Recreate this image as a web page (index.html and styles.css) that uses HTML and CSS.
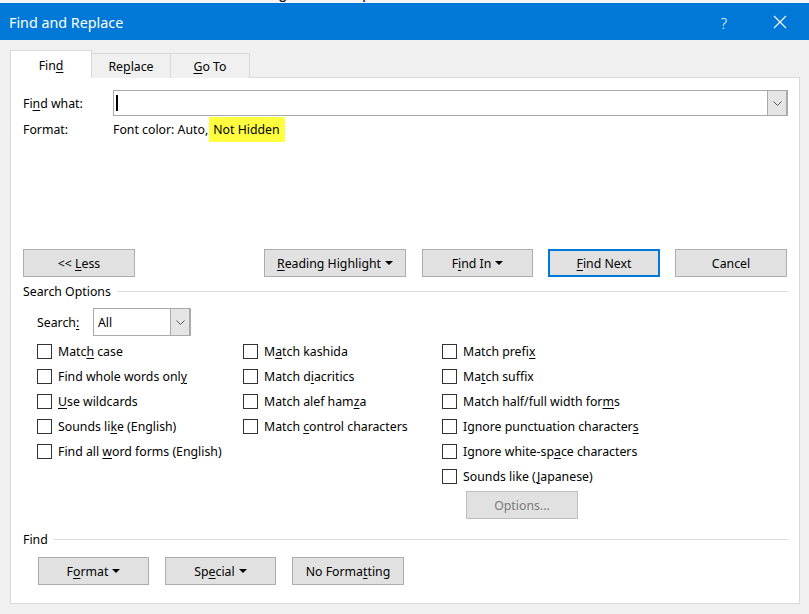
FILE: index.html
```html
<!DOCTYPE html>
<html lang="en">
<head>
<meta charset="utf-8">
<title>Find and Replace</title>
<link rel="stylesheet" href="styles.css">
</head>
<body>
<div class="doc-strip"><div class="doc-text">Nes as link buttons for clicking on Caption 2 if not the</div></div>
<div class="window">
  <header class="titlebar">
    <span class="title">Find and Replace</span>
    <span class="help">?</span>
    <span class="close"><svg width="14" height="14" viewBox="0 0 14 14"><path d="M1 1 L13 13 M13 1 L1 13" stroke="#fff" stroke-width="1.1" fill="none"/></svg></span>
  </header>
  <main class="body">
    <div class="tabs">
      <div class="tab active"><span>Fin<u>d</u></span></div>
      <div class="tab"><span>Re<u>p</u>lace</span></div>
      <div class="tab"><span><u>G</u>o To</span></div>
    </div>
    <section class="panel">
      <div class="find-row">
        <span class="lbl">Fi<u>n</u>d what:</span>
        <div class="combo">
          <div class="combo-field"><span class="caret"></span></div>
          <div class="combo-btn"><svg width="9" height="5" viewBox="0 0 9 5"><path d="M0.5 0.5 L4.5 4.5 L8.5 0.5" stroke="#555" stroke-width="1" fill="none"/></svg></div>
        </div>
      </div>
      <div class="format-row">
        <span class="lbl">Format:</span>
        <span class="fmt">Font color: Auto,<mark class="hl">Not Hidden</mark></span>
      </div>

      <div class="btn-row">
        <button class="btn w112"><span>&lt;&lt; <u>L</u>ess</span></button>
        <div class="grow"></div>
        <button class="btn w142"><span><u>R</u>eading Highlight</span><span class="tri"></span></button>
        <button class="btn w111"><span>F<u>i</u>nd In</span><span class="tri"></span></button>
        <button class="btn w112 default"><span><u>F</u>ind Next</span></button>
        <button class="btn w112"><span>Cancel</span></button>
      </div>

      <div class="group-head"><span>Search Options</span><span class="rule"></span></div>

      <div class="search-row">
        <span class="search-lbl">Search<u>:</u></span>
        <div class="select">
          <div class="select-field">All</div>
          <div class="select-btn"><svg width="9" height="5" viewBox="0 0 9 5"><path d="M0.5 0.5 L4.5 4.5 L8.5 0.5" stroke="#555" stroke-width="1" fill="none"/></svg></div>
        </div>
      </div>

      <div class="options">
        <div class="col c1">
          <div class="chk"><span class="box"></span><span>Matc<u>h</u> case</span></div>
          <div class="chk"><span class="box"></span><span>Find whole words onl<u>y</u></span></div>
          <div class="chk"><span class="box"></span><span><u>U</u>se wildcards</span></div>
          <div class="chk"><span class="box"></span><span>Sounds li<u>k</u>e (English)</span></div>
          <div class="chk"><span class="box"></span><span>Find all <u>w</u>ord forms (English)</span></div>
        </div>
        <div class="col c2">
          <div class="chk"><span class="box"></span><span>M<u>a</u>tch kashida</span></div>
          <div class="chk"><span class="box"></span><span>Match d<u>i</u>acritics</span></div>
          <div class="chk"><span class="box"></span><span>Match alef ham<u>z</u>a</span></div>
          <div class="chk"><span class="box"></span><span>Match <u>c</u>ontrol characters</span></div>
        </div>
        <div class="col c3">
          <div class="chk"><span class="box"></span><span>Match prefi<u>x</u></span></div>
          <div class="chk"><span class="box"></span><span>Ma<u>t</u>ch suffix</span></div>
          <div class="chk"><span class="box"></span><span>Match half/full width for<u>m</u>s</span></div>
          <div class="chk"><span class="box"></span><span>Ignore punctuation character<u>s</u></span></div>
          <div class="chk"><span class="box"></span><span>Ignore white-sp<u>a</u>ce characters</span></div>
          <div class="chk"><span class="box"></span><span>Sounds like (<u>J</u>apanese)</span></div>
          <button class="btn w112 disabled options-btn"><span>Options...</span></button>
        </div>
      </div>

      <div class="group-head find-head"><span>Find</span><span class="rule"></span></div>

      <div class="bottom-row">
        <button class="btn w111"><span>F<u>o</u>rmat</span><span class="tri"></span></button>
        <button class="btn w111"><span>Sp<u>e</u>cial</span><span class="tri"></span></button>
        <button class="btn w112"><span>No Forma<u>t</u>ting</span></button>
      </div>
    </section>
  </main>
</div>
</body>
</html>
```

FILE: styles.css
```css
* { box-sizing: border-box; }

html, body {
  margin: 0;
  padding: 0;
}

body {
  width: 809px;
  height: 614px;
  overflow: hidden;
  background: #f0f0f0;
  font-family: "Noto Sans", "Open Sans", sans-serif;
  font-size: 12.3px;
  color: #000;
}

u { text-decoration: underline; text-underline-offset: 2px; }

.doc-strip {
  height: 3px;
  overflow: hidden;
  background: #f4f4f4;
}

.doc-text {
  margin-top: -15px;
  padding-left: 2px;
  font-family: "Liberation Sans", sans-serif;
  font-size: 16px;
  line-height: 18px;
  word-spacing: 14px;
  white-space: nowrap;
  color: #111;
}

.titlebar {
  height: 37px;
  background: #0078d7;
  color: #fff;
  display: flex;
  align-items: center;
  padding-left: 9px;
  padding-top: 2px;
}

.title {
  font-size: 14.3px;
  flex: 1;
}

.help {
  width: 20px;
  text-align: center;
  font-size: 15px;
  margin-right: 39px;
  font-weight: 300;
}

.close {
  display: flex;
  align-items: center;
  margin-right: 22px;
  margin-top: -2px;
}

.body {
  padding: 10px 9px 0 10px;
}

.tabs {
  display: flex;
  align-items: flex-end;
  height: 28px;
  margin-bottom: -1px;
}

.tab {
  height: 25px;
  border: 1px solid #d9d9d9;
  border-bottom: none;
  background: #f0f0f0;
  display: flex;
  align-items: center;
  justify-content: center;
  width: 80px;
  margin-left: -1px;
  padding-top: 1px;
}

.tab.active {
  position: relative;
  z-index: 2;
  height: 28px;
  width: 82px;
  margin-left: 0;
  background: #fff;
  padding-top: 2px;
}

.tab.active + .tab { margin-left: 0; border-left: none; width: 79px; }

.panel {
  width: 790px;
  height: 527px;
  background: #fff;
  border: 1px solid #d9d9d9;
  padding: 0 11px 0 12px;
  display: flex;
  flex-direction: column;
}

.find-row {
  margin-top: 12px;
  display: flex;
  align-items: center;
}

.lbl {
  width: 90px;
  flex: none;
}

.combo {
  flex: 1;
  height: 26px;
  border: 1px solid #a9a9a9;
  display: flex;
}

.combo-field {
  flex: 1;
  display: flex;
  align-items: center;
  padding-left: 2px;
}

.caret {
  width: 2px;
  height: 16px;
  background: #000;
}

.combo-btn, .select-btn {
  width: 20px;
  background: #e5e5e5;
  border-left: 1px solid #a9a9a9;
  border-right: 1px solid #a9a9a9;
  display: flex;
  align-items: center;
  justify-content: center;
}

.format-row {
  margin-top: 1px;
  height: 24px;
  display: flex;
  align-items: center;
}

.hl {
  background: #ffff40;
  color: #000;
  padding: 4px 5px 4px 4px;
  margin-left: 1px;
}

.btn-row {
  margin-top: 108px;
  margin-right: 1px;
  display: flex;
  gap: 15px;
}

.grow { flex: 1; }

.btn {
  height: 28px;
  background: #e1e1e1;
  border: 1px solid #adadad;
  font-family: inherit;
  font-size: 12.3px;
  color: #000;
  padding: 0;
  display: inline-flex;
  align-items: center;
  justify-content: center;
  flex: none;
}

.w111 { width: 111px; }
.w112 { width: 112px; }
.w142 { width: 142px; margin-right: 1px; }

.btn.default {
  border: 2px solid #0078d7;
}

.btn.disabled {
  color: #7a7a7a;
  border-color: #bfbfbf;
  background: #e1e1e1;
}

.tri {
  display: inline-block;
  width: 0;
  height: 0;
  margin-left: 4px;
  border-left: 4px solid transparent;
  border-right: 4px solid transparent;
  border-top: 4px solid #000;
}

.group-head {
  margin-top: 5px;
  height: 18px;
  display: flex;
  align-items: center;
  gap: 6px;
}

.rule {
  flex: 1;
  height: 1px;
  background: #dcdcdc;
}

.search-row {
  margin-top: 8px;
  padding-left: 14px;
  display: flex;
  align-items: center;
}

.search-lbl {
  width: 56px;
  flex: none;
}

.select {
  width: 98px;
  height: 28px;
  border: 1px solid #a9a9a9;
  display: flex;
}

.select-field {
  flex: 1;
  display: flex;
  align-items: center;
  padding-left: 4px;
}

.options {
  margin-top: 3px;
  padding-left: 14px;
  display: grid;
  grid-template-columns: 206px 199px 1fr;
}

.chk {
  height: 25px;
  display: flex;
  align-items: center;
  white-space: nowrap;
}

.box {
  width: 15px;
  height: 15px;
  border: 1px solid #333;
  background: #fff;
  margin-right: 6px;
  flex: none;
}

.options-btn {
  margin-top: 2px;
  margin-left: 24px;
}

.find-head {
  margin-top: 11px;
}

.bottom-row {
  margin-top: 9px;
  padding-left: 15px;
  display: flex;
  gap: 16px;
}
```
